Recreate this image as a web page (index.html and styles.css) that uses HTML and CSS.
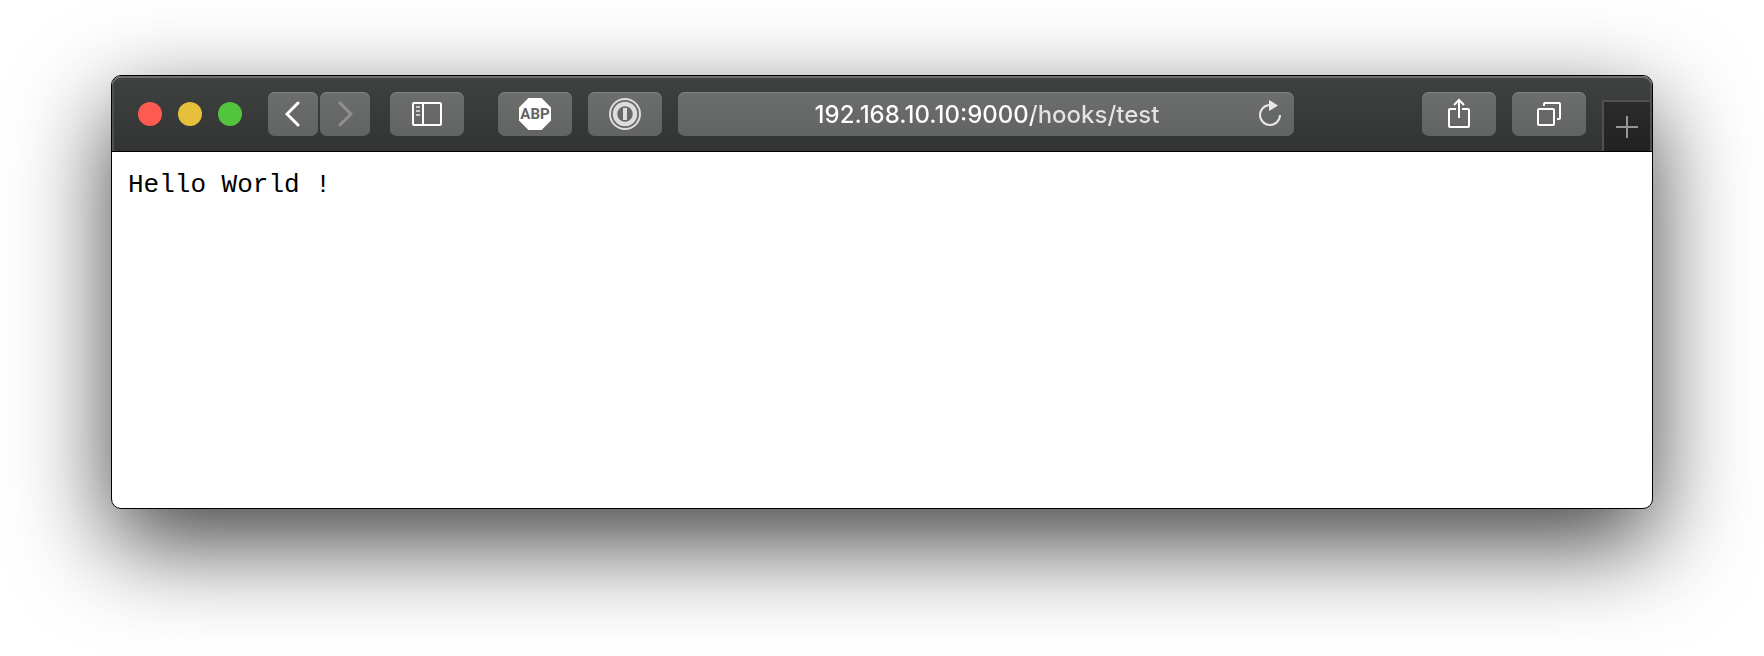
FILE: index.html
```html
<!DOCTYPE html>
<html lang="en">
<head>
<meta charset="utf-8">
<meta name="viewport" content="width=device-width, initial-scale=1">
<title>192.168.10.10:9000/hooks/test</title>
<link rel="stylesheet" href="styles.css">
</head>
<body>
<div class="window">
  <header class="toolbar">
    <div class="lights">
      <button class="light light-close" type="button" aria-label="Close"></button>
      <button class="light light-minimize" type="button" aria-label="Minimize"></button>
      <button class="light light-zoom" type="button" aria-label="Zoom"></button>
    </div>
    <nav class="history" aria-label="History">
      <button class="tool tool-narrow" type="button" aria-label="Back">
        <svg width="16" height="26" viewBox="0 0 16 26" fill="none" stroke="#fff" stroke-width="3" stroke-linecap="round" stroke-linejoin="miter"><path d="M13 2 2 13l11 11"/></svg>
      </button>
      <button class="tool tool-narrow" type="button" aria-label="Forward" disabled>
        <svg width="16" height="26" viewBox="0 0 16 26" fill="none" stroke="#8f908f" stroke-width="3" stroke-linecap="round" stroke-linejoin="miter"><path d="m3 2 11 11L3 24"/></svg>
      </button>
    </nav>
    <button class="tool" type="button" aria-label="Show sidebar">
      <svg width="30" height="24" viewBox="0 0 30 24" fill="none" stroke="#fff" stroke-width="2"><rect x="1" y="1" width="28" height="22" rx="1"/><path d="M11 1v22"/><path stroke="#c4c5c4" d="M4 5h4M4 9h4M4 13h4"/></svg>
    </button>
    <div class="extensions">
      <button class="tool" type="button" aria-label="Adblock Plus">
        <svg width="32" height="32" viewBox="0 0 32 32"><path fill="#fff" d="M9.400 0h13.200L32 9.400v13.200L22.600 32H9.400L0 22.600V9.400z"/><text class="abp" x="16" y="21" text-anchor="middle">ABP</text></svg>
      </button>
      <button class="tool" type="button" aria-label="1Password">
        <svg width="32" height="32" viewBox="0 0 32 32" fill="none" stroke="#dcdddc"><circle cx="16" cy="16" r="15" stroke-width="2"/><circle cx="16" cy="16" r="10" stroke-width="4.500"/><path d="M16 10v12" stroke-width="4"/></svg>
      </button>
    </div>
    <div class="address">
      <input class="address-input" type="text" aria-label="Address" value="192.168.10.10:9000/hooks/test" spellcheck="false">
      <button class="reload" type="button" aria-label="Reload">
        <svg width="24" height="28" viewBox="0 0 24 28" fill="none"><path d="M12 5a10 10 0 1 0 10 10" stroke="#e8e8e8" stroke-width="2"/><path d="m11 0 9 5.500-9 5.500z" fill="#e8e8e8"/></svg>
      </button>
    </div>
    <div class="actions">
      <button class="tool" type="button" aria-label="Share">
        <svg width="24" height="32" viewBox="0 0 24 32" fill="none" stroke="#fff" stroke-width="2"><path d="M9 11H3q-1 0-1 1v16q0 1 1 1h18q1 0 1-1V12q0-1-1-1h-6M12 20V2M7 7l5-5 5 5"/></svg>
      </button>
      <button class="tool" type="button" aria-label="Show all tabs">
        <svg width="24" height="24" viewBox="0 0 24 24" fill="none" stroke="#fff" stroke-width="2"><rect x="1" y="7" width="16" height="16" rx="1"/><path d="M7 4V2q0-1 1-1h14q1 0 1 1v14q0 1-1 1h-2"/></svg>
      </button>
    </div>
    <button class="new-tab" type="button" aria-label="New tab">
      <svg width="22" height="22" viewBox="0 0 22 22" fill="none" stroke="#969696" stroke-width="2"><path d="M11 0v22M0 11h22"/></svg>
    </button>
  </header>
  <main class="page">
    <pre class="output">Hello World !</pre>
  </main>
</div>
</body>
</html>
```
FILE: styles.css
```css
* {
  box-sizing: border-box;
}

body {
  display: flex;
  min-height: 100vh;
  margin: 0;
  padding: 75px 111px 147px;
  background: #fff;
  font-family: Inter, Roboto, sans-serif;
}

button {
  display: flex;
  align-items: center;
  justify-content: center;
  flex: none;
  margin: 0;
  padding: 0;
  border: 0;
}

svg {
  display: block;
}

.window {
  display: flex;
  flex: 1;
  flex-direction: column;
  overflow: hidden;
  min-width: 0;
  border: 1px solid #000;
  border-radius: 10px;
  background: #fff;
  box-shadow: 0 34px 96px rgba(0, 0, 0, 0.75);
}

.toolbar {
  display: flex;
  align-items: center;
  height: 76px;
  padding-left: 26px;
  border-bottom: 1px solid #000;
  border-radius: 9px 9px 0 0;
  background: linear-gradient(#404241, #323433);
  box-shadow: inset 0 2px 0 #6c6e6d, inset 2px 0 0 #505251, inset -2px 0 0 #505251;
}

.lights {
  display: flex;
  gap: 16px;
  margin-right: 26px;
}

.light {
  width: 24px;
  height: 24px;
  border-radius: 50%;
}

.light-close {
  background: #ff5a52;
}

.light-minimize {
  background: #e6c03a;
}

.light-zoom {
  background: #52c43d;
}

.history {
  display: flex;
  gap: 2px;
  margin-right: 20px;
}

.tool,
.address {
  height: 44px;
  border-radius: 7px;
  background: linear-gradient(#6c6e6d, #626463);
  box-shadow: inset 0 1px 0 #828483;
}

.tool {
  width: 74px;
}

.tool-narrow {
  width: 50px;
}

.extensions {
  display: flex;
  gap: 16px;
  margin: 0 16px 0 34px;
}

.abp {
  fill: #636564;
  font: bold 15px Roboto, sans-serif;
}

.address {
  display: flex;
  flex: 1;
  min-width: 0;
  margin-right: 128px;
  padding-left: 50px;
}

.address-input {
  flex: 1;
  min-width: 0;
  padding: 2px 0 0;
  border: 0;
  outline: 0;
  background: linear-gradient(90deg, #fff calc(50% + 46px), #e2e3e2 calc(50% + 46px));
  background-clip: text;
  color: #fff;
  font: 500 24px Inter, sans-serif;
  text-align: center;
  -webkit-text-fill-color: transparent;
}

.reload {
  width: 48px;
  background: none;
}

.actions {
  display: flex;
  gap: 16px;
  margin-right: 16px;
}

.new-tab {
  align-self: flex-end;
  width: 50px;
  height: 51px;
  border: solid #505251;
  border-width: 2px 2px 0;
  background: linear-gradient(#2a2b2a, #212221);
}

.page {
  flex: 1;
  padding: 16px;
}

.output {
  margin: 0;
  color: #000;
  font: 26px/34px "Courier New", "Liberation Mono", monospace;
}
```
